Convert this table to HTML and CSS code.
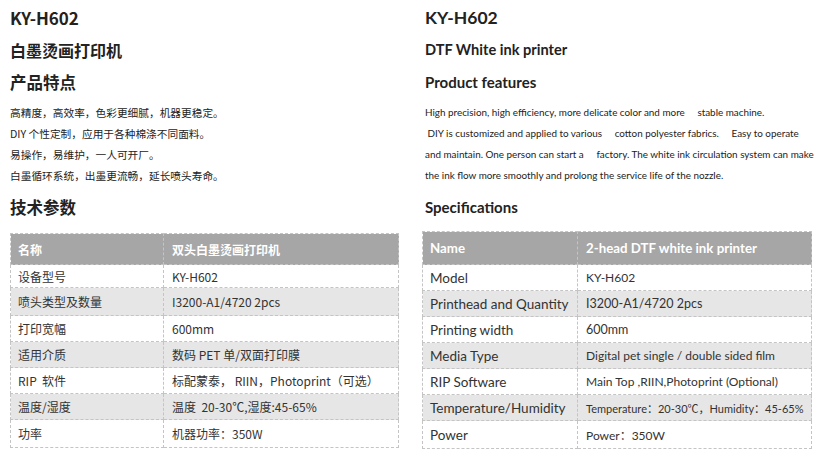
FILE: index.html
```html
<!DOCTYPE html>
<html lang="zh">
<head>
<meta charset="utf-8">
<title>KY-H602</title>
<link rel="stylesheet" href="styles.css">
</head>
<body>
<div class="page">
  <section class="col col-zh">
    <h1 class="model">KY-H602</h1>
    <h2 class="name">白墨烫画打印机</h2>
    <h3 class="sec sec-features">产品特点</h3>
    <div class="features">
      <p>高精度，高效率，色彩更细腻，机器更稳定。</p>
      <p>DIY 个性定制，应用于各种棉涤不同面料。</p>
      <p>易操作，易维护，一人可开厂。</p>
      <p>白墨循环系统，出墨更流畅，延长喷头寿命。</p>
    </div>
    <h3 class="sec sec-spec">技术参数</h3>
    <table class="spec">
      <colgroup><col class="c1"><col class="c2"></colgroup>
      <thead>
        <tr><th>名称</th><th>双头白墨烫画打印机</th></tr>
      </thead>
      <tbody>
        <tr class="short"><td>设备型号</td><td>KY-H602</td></tr>
        <tr class="alt tall"><td>喷头类型及数量</td><td>I3200-A1/4720 2pcs</td></tr>
        <tr><td>打印宽幅</td><td>600mm</td></tr>
        <tr class="alt"><td>适用介质</td><td>数码 PET 单/双面打印膜</td></tr>
        <tr><td>RIP&nbsp; 软件</td><td>标配蒙泰，&nbsp;RIIN，Photoprint（可选）</td></tr>
        <tr class="alt"><td>温度/湿度</td><td>温度&nbsp; 20-30℃,湿度:45-65%</td></tr>
        <tr class="tall"><td>功率</td><td>机器功率：350W</td></tr>
      </tbody>
    </table>
  </section>

  <section class="col col-en">
    <h1 class="model">KY-H602</h1>
    <h2 class="name">DTF White ink printer</h2>
    <h3 class="sec sec-features">Product features</h3>
    <div class="features">
      <p>High precision, high efficiency, more delicate color and more&nbsp;&nbsp;&nbsp;&nbsp; stable machine.</p>
      <p>&nbsp;DIY is customized and applied to various&nbsp;&nbsp;&nbsp;&nbsp; cotton polyester fabrics.&nbsp;&nbsp;&nbsp;&nbsp; Easy to operate</p>
      <p>and maintain. One person can start a&nbsp;&nbsp;&nbsp;&nbsp; factory. The white ink circulation system can make</p>
      <p>the ink flow more smoothly and prolong the service life of the nozzle.</p>
    </div>
    <h3 class="sec sec-spec">Specifications</h3>
    <table class="spec">
      <colgroup><col class="c1"><col class="c2"></colgroup>
      <thead>
        <tr><th>Name</th><th>2-head DTF white ink printer</th></tr>
      </thead>
      <tbody>
        <tr><td>Model</td><td class="sm">KY-H602</td></tr>
        <tr class="alt"><td>Printhead and Quantity</td><td class="md">I3200-A1/4720 2pcs</td></tr>
        <tr><td>Printing width</td><td class="md">600mm</td></tr>
        <tr class="alt"><td>Media Type</td><td class="sm">Digital pet single / double sided film</td></tr>
        <tr><td>RIP Software</td><td class="sm">Main Top ,RIIN,Photoprint (Optional)</td></tr>
        <tr class="alt"><td>Temperature/Humidity</td><td class="xs">Temperature：20-30℃，Humidity：45-65%</td></tr>
        <tr class="tall"><td>Power</td><td class="sm">Power：350W</td></tr>
      </tbody>
    </table>
  </section>
</div>
</body>
</html>
```

FILE: styles.css
```css
html, body {
  margin: 0;
  padding: 0;
  background: #ffffff;
  color: #222222;
}

.page {
  display: flex;
  align-items: flex-start;
  padding-left: 10px;
}

.col-zh {
  width: 390px;
  font-family: "Noto Sans CJK SC", "Noto Sans", sans-serif;
}

.col-en {
  width: 404px;
  margin-left: 22px;
  font-family: Lato, "Noto Sans CJK SC", sans-serif;
}

h1, h2, h3, p {
  margin: 0;
  font-weight: 700;
}

p {
  font-weight: 400;
  white-space: nowrap;
}

.model {
  font-size: 17px;
  line-height: 36px;
}

.name {
  font-size: 16px;
  line-height: 28px;
}

.sec-features {
  font-size: 16.5px;
  line-height: 36px;
}

.features {
  margin-top: 2px;
}

.features p {
  font-size: 10.7px;
  line-height: 21px;
}

.sec-spec {
  font-size: 16.5px;
  line-height: 42px;
}

.col-en .model,
.col-en .name,
.col-en .sec,
.col-en .features {
  padding-left: 3px;
}

.col-en .model { font-size: 17.5px; }
.col-en .name { font-size: 14.6px; }
.col-en .sec { font-size: 15px; }
.col-en .features p { font-size: 9.9px; }

.spec {
  border-collapse: collapse;
  table-layout: fixed;
  margin-top: 5px;
  width: 389px;
  font-size: 12px;
  color: #333333;
}

.col-zh .spec .c1 { width: 153px; }
.col-en .spec .c1 { width: 155px; }

.col-en .spec {
  margin-top: 3px;
  width: 390px;
  font-size: 13.5px;
}

.spec th,
.spec td {
  border: 1px dashed #c4c4c4;
  padding: 0 7px;
  height: 25px;
  text-align: left;
  white-space: nowrap;
  font-weight: 400;
}

.spec tr.short td { height: 22px; }
.spec tr.tall td { height: 27px; }

.spec td + td,
.spec th + th {
  padding-left: 8px;
}

.spec th {
  background: #a6a6a6;
  color: #ffffff;
  font-weight: 700;
  height: 30px;
}

.col-en .spec th { height: 32px; font-size: 13.3px; }

.spec tr.alt td {
  background: #e6e6e6;
}

.col-en .spec td.md { font-size: 12.5px; }
.col-en .spec td.sm { font-size: 12px; }
.col-en .spec td.xs { font-size: 11px; }
```
